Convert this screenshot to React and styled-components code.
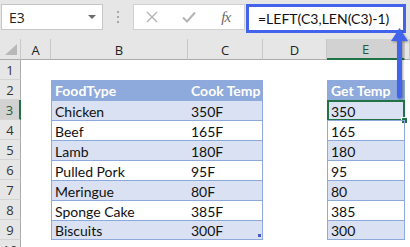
import React from "react";
import styled, { createGlobalStyle, css } from "styled-components";

const GlobalStyle = createGlobalStyle`
  html, body {
    margin: 0;
    padding: 0;
    background: #ffffff;
  }
  body {
    font-family: "Lato", "Liberation Sans", sans-serif;
  }
`;

const ACCENT = "#4263eb";
const GREEN = "#217346";
const TABLE_HEAD = "#8ea9db";
const TABLE_BAND = "#d9e1f2";

const Frame = styled.div`
  position: relative;
  width: 410px;
  height: 247px;
  overflow: hidden;
  background: #fff;
`;

const FormulaBar = styled.div`
  display: flex;
  align-items: flex-start;
  height: 39px;
  box-sizing: border-box;
  padding: 4px 0 0 1px;
  background: #e6e6e6;
`;

const NameBox = styled.div`
  display: flex;
  align-items: center;
  justify-content: space-between;
  width: 102px;
  height: 26px;
  box-sizing: border-box;
  padding: 0 6px 0 7px;
  background: #fff;
  border: 1px solid #c6c6c6;
  font-family: "Open Sans", sans-serif;
  font-size: 14px;
  color: #222;

  .caret {
    width: 0;
    height: 0;
    border-left: 4px solid transparent;
    border-right: 4px solid transparent;
    border-top: 4px solid #6a6a6a;
  }
`;

const Grip = styled.div`
  display: flex;
  flex-direction: column;
  align-items: center;
  justify-content: center;
  gap: 3px;
  width: 30px;
  height: 26px;

  span {
    width: 2px;
    height: 2px;
    background: #a6a6a6;
  }
`;

const ActionBox = styled.div`
  display: grid;
  grid-template-columns: repeat(3, 1fr);
  align-items: center;
  justify-items: center;
  width: 112px;
  height: 26px;
  box-sizing: border-box;
  background: #fff;
  border: 1px solid #d0d0d0;
  color: #b4b4b4;
`;

const Fx = styled.span`
  font-family: "Liberation Serif", serif;
  font-style: italic;
  font-size: 15px;
  color: #6a6a6a;
  letter-spacing: -1px;
`;

const FormulaInput = styled.div`
  display: flex;
  align-items: center;
  width: 160px;
  height: 29px;
  margin-left: 1px;
  box-sizing: border-box;
  padding-left: 9px;
  background: #fff;
  border: 3px solid ${ACCENT};
  font-size: 14px;
  color: #111;
`;

const Sheet = styled.div`
  display: grid;
  grid-template-columns: 21px 30px 137px 75px 64px 78px 5px;
  grid-template-rows: 21px repeat(10, 20px);
  background: #fff;
`;

const ColHead = styled.div`
  display: flex;
  align-items: center;
  justify-content: center;
  box-sizing: border-box;
  background: ${(p) => (p.$active ? "#d2d2d2" : "#e6e6e6")};
  border-right: 1px solid #c8c8c8;
  border-bottom: ${(p) => (p.$active ? `2px solid ${GREEN}` : "1px solid #ababab")};
  font-family: "Open Sans", sans-serif;
  font-size: 13px;
  color: ${(p) => (p.$active ? "#1e5c36" : "#222")};
  padding-top: 1px;
`;

const Corner = styled.div`
  position: relative;
  box-sizing: border-box;
  background: #e6e6e6;
  border-right: 1px solid #c8c8c8;
  border-bottom: 1px solid #ababab;

  &::after {
    content: "";
    position: absolute;
    right: 3px;
    bottom: 4px;
    border-left: 12px solid transparent;
    border-bottom: 11px solid #b8b8b8;
  }
`;

const RowHead = styled.div`
  display: flex;
  align-items: center;
  justify-content: center;
  box-sizing: border-box;
  background: ${(p) => (p.$active ? "#d2d2d2" : "#e6e6e6")};
  border-bottom: 1px solid #d4d4d4;
  border-right: ${(p) => (p.$active ? `2px solid ${GREEN}` : "1px solid #ababab")};
  font-family: "Open Sans", sans-serif;
  font-size: 13px;
  color: ${(p) => (p.$active ? "#1e5c36" : "#333")};
`;

const Cell = styled.div`
  position: relative;
  display: flex;
  align-items: center;
  box-sizing: border-box;
  padding: 1px 0 0 3px;
  font-size: 14px;
  color: #111;
  white-space: nowrap;

  ${(p) =>
    p.$kind === "head" &&
    css`
      background: ${TABLE_HEAD};
      color: #fff;
      font-weight: 700;
    `}
  ${(p) =>
    p.$kind === "band" &&
    css`
      background: ${TABLE_BAND};
    `}
  ${(p) =>
    p.$kind &&
    css`
      border-top: ${p.$kind === "head" ? "none" : `1px solid ${TABLE_HEAD}`};
      ${p.$last && `border-bottom: 1px solid ${TABLE_HEAD};`}
      ${p.$left && `border-left: 1px solid ${TABLE_HEAD};`}
      ${p.$right && `border-right: 1px solid ${TABLE_HEAD};`}
    `}
`;

const Selection = styled.div`
  position: absolute;
  left: -1px;
  top: -1px;
  right: -1px;
  bottom: -1px;
  border: 2px solid ${GREEN};
  pointer-events: none;

  &::after {
    content: "";
    position: absolute;
    right: -5px;
    bottom: -5px;
    width: 5px;
    height: 5px;
    background: ${GREEN};
    border: 1px solid #fff;
  }
`;

const ResizeHandle = styled.span`
  position: absolute;
  right: 1px;
  bottom: 2px;
  width: 3px;
  height: 3px;
  background: #4a5bbf;
`;

const Arrow = styled.svg`
  position: absolute;
  left: 385px;
  top: 24px;
  overflow: visible;
`;

const columns = ["A", "B", "C", "D", "E"];

const foods = [
  ["Chicken", "350F", "350"],
  ["Beef", "165F", "165"],
  ["Lamb", "180F", "180"],
  ["Pulled Pork", "95F", "95"],
  ["Meringue", "80F", "80"],
  ["Sponge Cake", "385F", "385"],
  ["Biscuits", "300F", "300"],
];

function tableRow(rowNum) {
  if (rowNum === 2) return { kind: "head", b: "FoodType", c: "Cook Temp", e: "Get Temp" };
  const item = foods[rowNum - 3];
  if (!item) return null;
  return {
    kind: rowNum % 2 === 1 ? "band" : "plain",
    b: item[0],
    c: item[1],
    e: item[2],
  };
}

export default function App() {
  const rows = Array.from({ length: 10 }, (_, i) => i + 1);

  return (
    <Frame>
      <GlobalStyle />
      <FormulaBar>
        <NameBox>
          <span>E3</span>
          <span className="caret" />
        </NameBox>
        <Grip>
          <span />
          <span />
          <span />
        </Grip>
        <ActionBox>
          <svg width="12" height="12" viewBox="0 0 12 12">
            <path d="M1 1L11 11M11 1L1 11" stroke="#b4b4b4" strokeWidth="1.4" fill="none" />
          </svg>
          <svg width="14" height="12" viewBox="0 0 14 12">
            <path d="M1 6.5L5 10.5L13 1.5" stroke="#b4b4b4" strokeWidth="2" fill="none" />
          </svg>
          <Fx>fx</Fx>
        </ActionBox>
        <FormulaInput>=LEFT(C3,LEN(C3)-1)</FormulaInput>
      </FormulaBar>

      <Sheet>
        <Corner />
        {columns.map((c) => (
          <ColHead key={c} $active={c === "E"}>
            {c}
          </ColHead>
        ))}
        <ColHead />

        {rows.map((r) => {
          const t = tableRow(r);
          const kind = t ? t.kind : undefined;
          const last = r === 9;
          return (
            <React.Fragment key={r}>
              <RowHead $active={r === 3}>{r}</RowHead>
              <Cell />
              <Cell $kind={kind} $left $last={last}>
                {t && t.b}
              </Cell>
              <Cell $kind={kind} $right $last={last}>
                {t && t.c}
                {last && <ResizeHandle />}
              </Cell>
              <Cell />
              <Cell $kind={kind} $left $right $last={last}>
                {t && t.e}
                {r === 3 && <Selection />}
              </Cell>
              <Cell />
            </React.Fragment>
          );
        })}
      </Sheet>

      <Arrow width="25" height="80" viewBox="0 0 25 80">
        <defs>
          <filter id="shadow" x="-50%" y="-20%" width="200%" height="140%">
            <feDropShadow dx="1" dy="1" stdDeviation="1" floodColor="#000" floodOpacity="0.35" />
          </filter>
        </defs>
        <g filter="url(#shadow)">
          <line x1="14.5" y1="14" x2="14.5" y2="72" stroke={ACCENT} strokeWidth="5" strokeLinecap="round" />
          <path d="M14.5 4L23 17L6 17Z" fill={ACCENT} />
        </g>
      </Arrow>
    </Frame>
  );
}
